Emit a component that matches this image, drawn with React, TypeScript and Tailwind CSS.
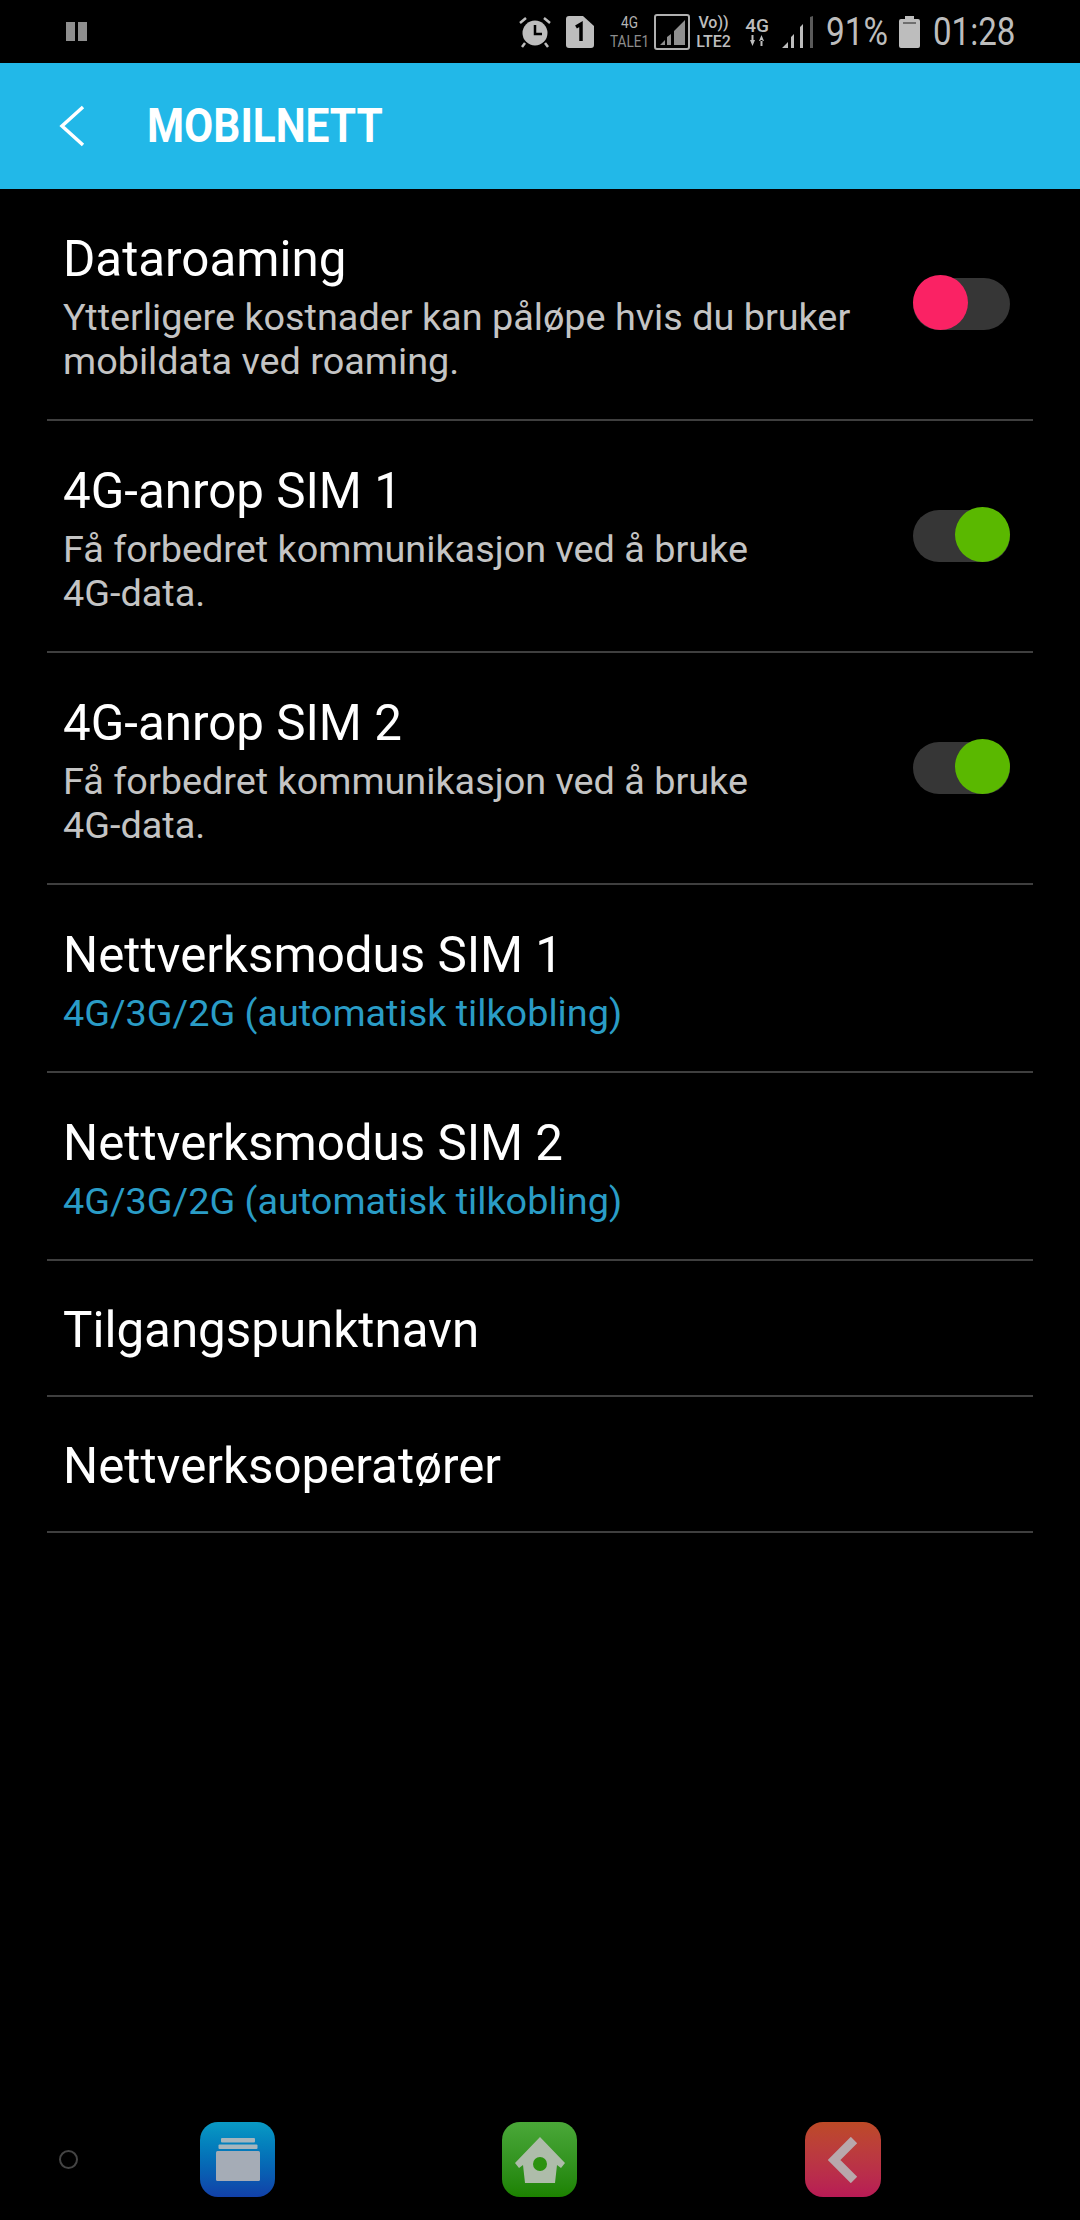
const font = { fontFamily: "Roboto, 'Noto Sans', sans-serif" };

function Toggle({ on }: { on: boolean }) {
  return (
    <div className="relative h-[52px] w-[97px] shrink-0 rounded-full bg-[#363636]">
      <div className={`absolute top-[-3px] h-[55px] w-[55px] rounded-full ${on ? "left-[42px] bg-[#5ab800]" : "left-0 bg-[#fa2264]"}`} />
    </div>
  );
}

function Row({ title, sub, blue, toggle, h, pt }: { title: string; sub?: string[]; blue?: boolean; toggle?: "on" | "off"; h: string; pt: string }) {
  return (
    <div className={`mx-[47px] flex items-start justify-between border-b-2 border-[#3f3f3f] ${h} ${pt}`}>
      <div className="pl-[16px]">
        <div className="text-[49.3px] leading-[58px] text-white">{title}</div>
        {sub && (
          <div className={`mt-[7px] text-[37.8px] leading-[44px] ${blue ? "text-[#2a9cc6]" : "text-[#c4c4c4]"}`}>
            {sub.map((s) => (
              <div key={s} className="whitespace-nowrap">{s}</div>
            ))}
          </div>
        )}
      </div>
      {toggle && (
        <div className="mr-[23px] mt-[48px]">
          <Toggle on={toggle === "on"} />
        </div>
      )}
    </div>
  );
}

function StatusBar() {
  return (
    <div className="flex h-[63px] items-center justify-between pl-[66px] pr-[66px] text-[#bdbdbd]">
      <div className="flex gap-[3px]">
        <div className="h-[19px] w-[9px] bg-[#8f8f8f]" />
        <div className="h-[19px] w-[9px] bg-[#8f8f8f]" />
      </div>
      <div className="flex items-center">
        <svg width="34" height="32" viewBox="0 0 34 32" className="mr-[14px]">
          <circle cx="17" cy="17" r="12.5" fill="#bdbdbd" />
          <path d="M17 9v9h7" fill="none" stroke="#000" strokeWidth="2.5" />
          <path d="M2 7l6-5M32 7l-6-5M7 27l-3 4M27 27l3 4" stroke="#bdbdbd" strokeWidth="2.5" />
        </svg>
        <svg width="28" height="32" viewBox="0 0 28 32" className="mr-[15px]">
          <path d="M3 0h14l11 10v19a3 3 0 0 1-3 3H3a3 3 0 0 1-3-3V3a3 3 0 0 1 3-3z" fill="#bdbdbd" />
          <path d="M10 11l5-3v17" fill="none" stroke="#000" strokeWidth="3.5" />
        </svg>
        <div className="mr-[4px] flex w-[41px] origin-center scale-x-[0.85] flex-col items-center text-[16px] leading-[19px]">
          <span className="text-[#b5b5b5]">4G</span>
          <span className="text-[#8d8d8d]">TALE1</span>
        </div>
        <svg width="36" height="36" viewBox="0 0 36 36" className="mr-[3px]">
          <rect x="1" y="1" width="34" height="34" rx="2" fill="none" stroke="#b0b0b0" strokeWidth="2" />
          <path d="M6 31l5-5v5zM13 31v-8l4-3v11zM20 31v-14l11-11v25z" fill="#8f8f8f" />
        </svg>
        <div className="mr-[11px] flex w-[41px] flex-col items-center text-[16px] font-medium leading-[19px]">
          <span>Vo))</span>
          <span>LTE2</span>
        </div>
        <div className="mr-[13px] flex w-[24px] flex-col items-center">
          <span className="text-[19px] font-medium leading-[18px]">4G</span>
          <svg width="18" height="11" viewBox="0 0 18 11">
            <path d="M2 5h5L4.500 11zM3.500 0h2v6h-2zM11 6h5L13.500 0zM12.500 5h2v6h-2z" fill="#bdbdbd" />
          </svg>
        </div>
        <svg width="31" height="32" viewBox="0 0 31 32" className="mr-[13px]">
          <path d="M0 32l6-6v6zM9 32v-11l3-3v14zM18 32v-21l3-3v24z" fill="#bdbdbd" />
          <path d="M28 32V1l3-1v32z" fill="#5a5a5a" />
        </svg>
        <div className="mr-[13px] w-[60px]">
          <span className="block origin-left scale-x-[0.88] whitespace-nowrap text-[38px] leading-none">91%</span>
        </div>
        <svg width="21" height="32" viewBox="0 0 21 32" className="mr-[13px]">
          <path d="M6 0h9v3h4a2 2 0 0 1 2 2v25a2 2 0 0 1-2 2H2a2 2 0 0 1-2-2V5a2 2 0 0 1 2-2h4z" fill="#bdbdbd" />
          <rect x="4" y="6" width="13" height="2" fill="#6f6f6f" />
        </svg>
        <div className="w-[81px]">
          <span className="block origin-left scale-x-[0.87] whitespace-nowrap text-[38px] leading-none">01:28</span>
        </div>
      </div>
    </div>
  );
}

export default function App() {
  return (
    <div className="flex h-[2220px] w-[1080px] flex-col bg-black" style={font}>
      <StatusBar />
      <div className="flex h-[126px] items-center bg-[#22b8e8]">
        <svg width="26" height="42" viewBox="0 0 26 42" className="ml-[59px]">
          <path d="M24 2L3 21l21 19" fill="none" stroke="#fff" strokeWidth="3.5" />
        </svg>
        <span className="ml-[62px] origin-left scale-x-[0.865] text-[49px] font-bold text-white">MOBILNETT</span>
      </div>
      <Row h="h-[232px]" pt="pt-[41px]" title="Dataroaming" sub={["Ytterligere kostnader kan påløpe hvis du bruker", "mobildata ved roaming."]} toggle="off" />
      <Row h="h-[232px]" pt="pt-[41px]" title="4G-anrop SIM 1" sub={["Få forbedret kommunikasjon ved å bruke", "4G-data."]} toggle="on" />
      <Row h="h-[232px]" pt="pt-[41px]" title="4G-anrop SIM 2" sub={["Få forbedret kommunikasjon ved å bruke", "4G-data."]} toggle="on" />
      <Row h="h-[188px]" pt="pt-[41px]" title="Nettverksmodus SIM 1" sub={["4G/3G/2G (automatisk tilkobling)"]} blue />
      <Row h="h-[188px]" pt="pt-[41px]" title="Nettverksmodus SIM 2" sub={["4G/3G/2G (automatisk tilkobling)"]} blue />
      <Row h="h-[136px]" pt="pt-[40px]" title="Tilgangspunktnavn" />
      <Row h="h-[136px]" pt="pt-[40px]" title="Nettverksoperatører" />
      <div className="relative mt-auto h-[98px] pb-[23px]">
        <div className="flex h-[75px] items-center">
          <div className="ml-[59px] h-[19px] w-[19px] rounded-full border-2 border-[#444]" />
          <div className="ml-[122px] flex h-[75px] w-[75px] items-center justify-center rounded-[18px] bg-gradient-to-b from-[#0a9ac4] to-[#1240a8]">
            <svg width="44" height="43" viewBox="0 0 44 43">
              <rect x="5" y="0" width="34" height="4.500" rx="1" fill="#a5b5bd" />
              <rect x="2.500" y="6.500" width="39" height="4.500" rx="1" fill="#a5b5bd" />
              <rect x="0" y="13" width="44" height="30" rx="1.500" fill="#a5acb6" />
            </svg>
          </div>
          <div className="ml-[227px] flex h-[75px] w-[75px] items-center justify-center rounded-[18px] bg-gradient-to-b from-[#4aa838] to-[#1c8200]">
            <svg width="50" height="46" viewBox="0 0 50 46">
              <path d="M25 0L50 26l-4 5-4-3-2 18H10L8 28l-4 3-4-5z" fill="#aebcaa" />
              <ellipse cx="25" cy="27" rx="7" ry="7" fill="#2c9210" />
            </svg>
          </div>
          <div className="ml-[228px] flex h-[75px] w-[76px] items-center justify-center rounded-[18px] bg-gradient-to-b from-[#bd4a26] to-[#b81a55]">
            <svg width="30" height="46" viewBox="0 0 30 46">
              <path d="M26 3L6 23l20 20" fill="none" stroke="#b8a8ac" strokeWidth="9" />
            </svg>
          </div>
        </div>
      </div>
    </div>
  );
}
